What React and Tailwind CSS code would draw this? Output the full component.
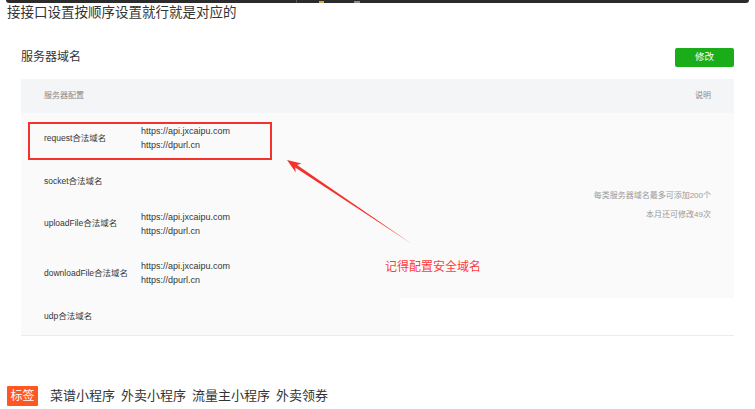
const rows = [
  { label: "request合法域名", urls: ["https://api.jxcaipu.com", "https://dpurl.cn"], h: "h-[50px]", boxed: true },
  { label: "socket合法域名", urls: [], h: "h-[36px]" },
  { label: "uploadFile合法域名", urls: ["https://api.jxcaipu.com", "https://dpurl.cn"], h: "h-[49px]" },
  { label: "downloadFile合法域名", urls: ["https://api.jxcaipu.com", "https://dpurl.cn"], h: "h-[50px]" },
];

const cjk = { fontFamily: '"Liberation Sans", "Noto Sans CJK SC", sans-serif' };

const App = () => {
  return (
    <div className="relative w-[755px] h-[409px] bg-white overflow-hidden" style={cjk}>
      {/* top bar from the previous block */}
      <div className="mx-[6px] h-[3px] bg-[#2b2b2b] rounded-b-[3px] flex items-center">
        <span className="ml-[290px] w-px h-[3px] bg-[#555]"></span>
        <span className="ml-[22px] w-[5px] h-[2px] bg-[#d9a43a]"></span>
        <span className="ml-[30px] w-[6px] h-[2px] bg-[#8a8a8a]"></span>
      </div>

      <div className="pl-[7px] mt-0 leading-[20px] text-[13.5px] text-[#333]">
        接接口设置按顺序设置就行就是对应的
      </div>

      <div className="px-[21px]">
        <div className="mt-[24px] flex items-center justify-between h-[20px]">
          <span className="text-[12px] text-[#353535]">服务器域名</span>
          <button className="w-[59px] h-[19px] bg-[#1aad19] rounded-[2px] text-white text-[9.5px] leading-none">
            修改
          </button>
        </div>

        <div className="mt-[12px]">
          {/* header */}
          <div className="h-[34px] bg-[#f4f5f6] flex items-center justify-between pl-[23px] pr-[23px] text-[8px] text-[#888]">
            <span>服务器配置</span>
            <span>说明</span>
          </div>

          {/* body */}
          <div className="bg-[#fafafa] border-b border-[#ececec]">
            <div className="flex">
              <div className="flex-1">
                {rows.map((r) => (
                  <div key={r.label} className={`relative flex items-center pl-[23px] ${r.h}`}>
                    {r.boxed && (
                      <div className="absolute left-[7px] top-[9px] w-[244px] h-[38px] border-2 border-[#f5312b]"></div>
                    )}
                    <span className="w-[97px] text-[8.5px] text-[#353535]">{r.label}</span>
                    <div className="flex flex-col text-[9px] leading-[14px] text-[#353535]">
                      {r.urls.map((u) => (
                        <span key={u}>{u}</span>
                      ))}
                    </div>
                  </div>
                ))}
              </div>
              <div className="pt-[76px] pr-[23px] flex flex-col items-end gap-[5px] text-[8px] leading-[14px] text-[#999]">
                <span>每类服务器域名最多可添加200个</span>
                <span>本月还可修改49次</span>
              </div>
            </div>
            <div className="flex items-stretch h-[37px]">
              <div className="w-[379px] flex items-center pl-[23px] text-[8.5px] text-[#353535]">udp合法域名</div>
              <div className="flex-1 bg-white"></div>
            </div>
          </div>
        </div>
      </div>

      {/* annotation */}
      <svg className="absolute left-0 top-0" width="755" height="409" viewBox="0 0 755 409">
        <polygon
          points="287,160 301.5,163.4 297,165 412,244 295.2,167.4 295.8,172.5"
          fill="#f5312b"
        />
      </svg>
      <div className="absolute left-[385px] top-[259px] text-[12px] leading-[16px] text-[#ff3b3b]">
        记得配置安全域名
      </div>

      <div className="absolute left-[7px] top-[386px] flex items-center">
        <span className="w-[31px] h-[20px] bg-[#ff5722] rounded-[1px] text-white text-[12px] flex items-center justify-center">
          标签
        </span>
        <div className="ml-[12px] flex gap-[6px] text-[13px] text-[#333]">
          <span>菜谱小程序</span>
          <span>外卖小程序</span>
          <span>流量主小程序</span>
          <span>外卖领券</span>
        </div>
      </div>
    </div>
  );
};

export default App;
